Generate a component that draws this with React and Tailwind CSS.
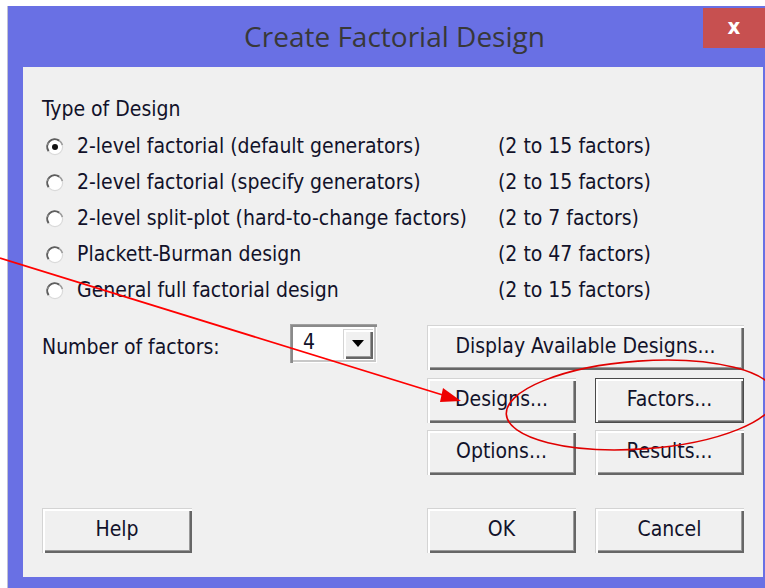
import React from 'react';

const raised =
  'bg-[#f0f0f0] shadow-[inset_1px_1px_0_#d4d4d4,inset_3px_3px_0_#ffffff,inset_-2px_-2px_0_#666666,inset_-3px_-3px_0_#9a9a9a]';

function Button({ children, className = '', isDefault = false }) {
  return (
    <div
      className={`flex items-center justify-center h-[45px] ${raised} ${
        isDefault ? 'outline outline-1 outline-[#4a4a4a] -outline-offset-1' : ''
      } ${className}`}
    >
      <span className="pb-[1px]">{children}</span>
    </div>
  );
}

function Radio({ checked }) {
  return (
    <svg width="20" height="20" viewBox="0 0 20 20" className="block shrink-0">
      <circle cx="10" cy="10" r="7.6" fill="#ffffff" stroke="#dadada" strokeWidth="1.2" />
      <path d="M3.6 14.2 A7.6 7.6 0 0 1 14.2 3.6" fill="none" stroke="#5e5e5e" strokeWidth="2" />
      <path d="M14.2 3.6 A7.6 7.6 0 0 1 17.4 8" fill="none" stroke="#9c9c9c" strokeWidth="1.6" />
      <path d="M2.6 8 A7.6 7.6 0 0 1 3.6 5.6" fill="none" stroke="#8a8a8a" strokeWidth="1.6" />
      {checked && <circle cx="10" cy="10" r="3" fill="#111111" />}
    </svg>
  );
}

const designs = [
  ['2-level factorial (default generators)', '(2 to 15 factors)', true],
  ['2-level factorial (specify generators)', '(2 to 15 factors)', false],
  ['2-level split-plot (hard-to-change factors)', '(2 to 7 factors)', false],
  ['Plackett-Burman design', '(2 to 47 factors)', false],
  ['General full factorial design', '(2 to 15 factors)', false],
];

export default function App() {
  return (
    <div
      className="relative w-[765px] h-[588px] overflow-hidden bg-white text-[#12122a]"
      style={{ fontFamily: '"DejaVu Sans Condensed", "DejaVu Sans", sans-serif', fontStretch: 'condensed' }}
    >
      {/* window frame */}
      <div className="ml-[7px] mt-[6px] h-[582px] bg-[#6970e4] border-l border-[#c2c2d2] flex flex-col">
        {/* title bar */}
        <div className="flex items-start h-[61px]">
          <div
            className="flex-1 pl-[78px] pt-[12px] text-center text-[28px] leading-[36px] text-[#383838]"
            style={{ fontFamily: '"Open Sans", sans-serif', fontStretch: 'normal' }}
          >
            Create Factorial Design
          </div>
          <div className="mt-[2px] w-[62px] h-[40px] bg-[#c75050] flex items-center justify-center text-white text-[22px] font-bold leading-none pb-[3px]">
            x
          </div>
        </div>

        {/* dialog body */}
        <div className="ml-[15px] mr-[2px] h-[510px] bg-[#f0f0f0] pl-[19px] text-[21px]">
          <div className="pt-[30px] leading-[24px] mb-[8px]">Type of Design</div>

          {designs.map(([label, range, checked]) => (
            <div key={label} className="flex items-center h-[36px]">
              <div className="w-[35px] pl-[3px] flex">
                <Radio checked={checked} />
              </div>
              <div className="w-[421px] whitespace-nowrap">{label}</div>
              <div className="whitespace-nowrap">{range}</div>
            </div>
          ))}

          {/* lower section */}
          <div className="flex mt-[16px]">
            <div className="w-[385px] flex items-start">
              <div className="w-[248px] pt-[7px]">Number of factors:</div>
              <div className="mt-[-1px] w-[87px] h-[39px] bg-white flex items-center shadow-[inset_1px_1px_0_#a0a0a0,inset_3px_3px_0_#8a8a8a,inset_-1px_-1px_0_#ffffff,inset_-3px_-3px_0_#c8c8c8]">
                <div className="flex-1 pl-[13px] pb-[1px]">4</div>
                <div className={`mr-[4px] w-[30px] h-[30px] flex items-center justify-center ${raised}`}>
                  <svg width="12" height="7" viewBox="0 0 12 7">
                    <path d="M0 0 H12 L6 7 Z" fill="#000" />
                  </svg>
                </div>
              </div>
            </div>
            <div className="w-[317px] grid grid-cols-2 gap-x-[19px]">
              <Button className="col-span-2 h-[44px]">Display Available Designs...</Button>
              <Button className="mt-[8px]">Designs...</Button>
              <Button className="mt-[8px]" isDefault>
                Factors...
              </Button>
              <Button className="mt-[7px]">Options...</Button>
              <Button className="mt-[7px]">Results...</Button>
            </div>
          </div>

          <div className="flex mt-[33px]">
            <div className="w-[385px]">
              <Button className="w-[150px]">Help</Button>
            </div>
            <div className="w-[317px] grid grid-cols-2 gap-x-[19px]">
              <Button>OK</Button>
              <Button>Cancel</Button>
            </div>
          </div>
        </div>
      </div>

      {/* red annotations */}
      <svg
        className="absolute inset-0 pointer-events-none"
        width="765"
        height="588"
        viewBox="0 0 765 588"
      >
        <line x1="0" y1="258" x2="446" y2="396" stroke="#ff0000" strokeWidth="1.8" />
        <polygon points="461,401 443,388 440,402" fill="#ee0000" />
        <ellipse
          cx="641"
          cy="405"
          rx="135"
          ry="44"
          transform="rotate(-4 641 405)"
          fill="none"
          stroke="#e00000"
          strokeWidth="1.6"
        />
      </svg>
    </div>
  );
}
